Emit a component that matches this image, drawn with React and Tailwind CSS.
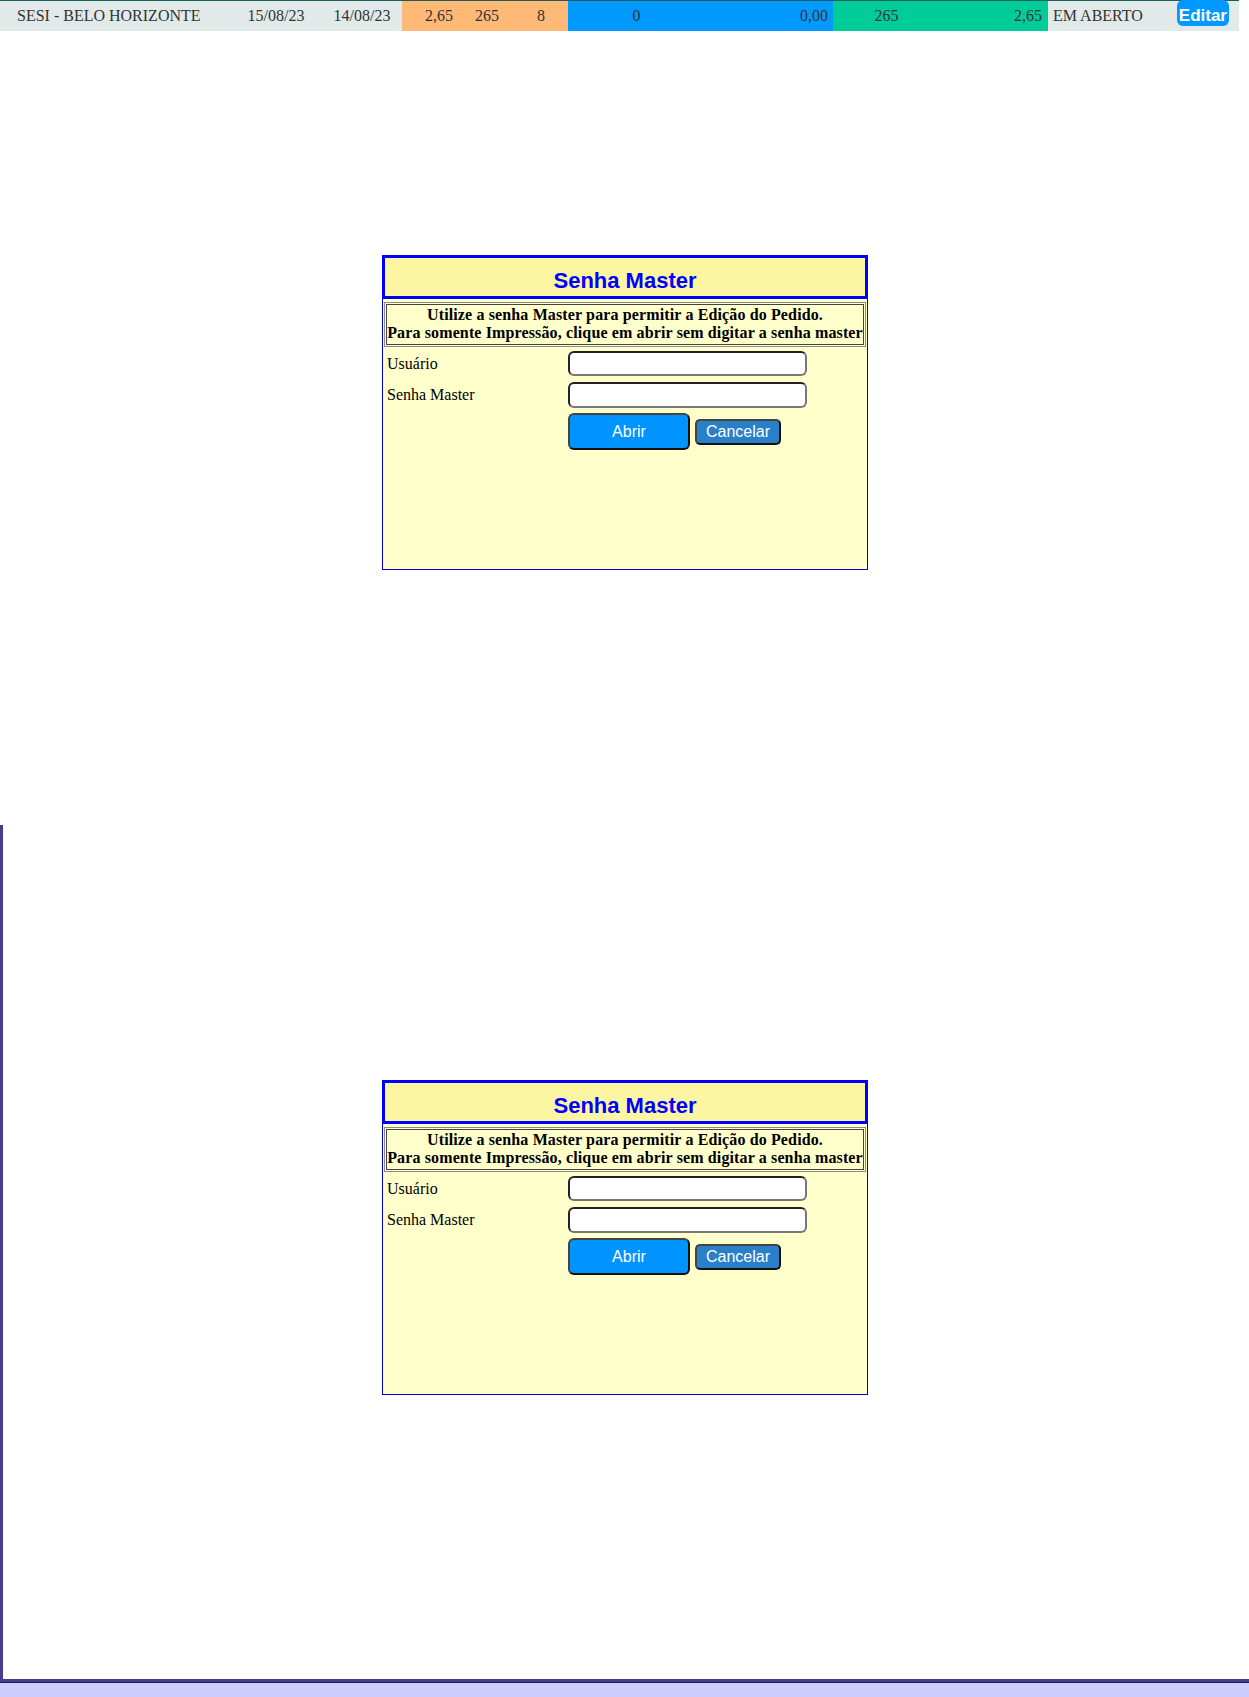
import React from 'react';

const serif = "font-['Liberation_Serif',serif]";
const sans = "font-['Liberation_Sans',Arial,sans-serif]";

function PedidoRow() {
    return (
        <div className={`flex w-[1239px] h-[31px] border-t border-[#1b5d59] bg-[#e1e9e9] text-[16px] leading-[30px] text-[#333] ${serif}`}>
            <div className="w-[230px] pl-[17px] whitespace-nowrap">SESI - BELO HORIZONTE</div>
            <div className="w-[92px] text-center">15/08/23</div>
            <div className="w-[80px] text-center">14/08/23</div>

            {/* quantidades */}
            <div className="flex bg-[#ffb977]">
                <div className="w-[55px] pr-[4px] text-right">2,65</div>
                <div className="w-[46px] pr-[4px] text-right">265</div>
                <div className="w-[46px] pr-[4px] text-right">8</div>
                <div className="w-[19px]" />
            </div>
            <div className="flex bg-[#0099ff]">
                <div className="w-[137px] text-center">0</div>
                <div className="w-[128px] pr-[5px] text-right">0,00</div>
            </div>
            <div className="flex bg-[#00cc99]">
                <div className="w-[107px] text-center">265</div>
                <div className="w-[108px] pr-[6px] text-right">2,65</div>
            </div>

            <div className="flex w-[191px] pl-[5px]">
                <span className="whitespace-nowrap">EM ABERTO</span>
                <button className={`ml-auto mr-[10px] -mt-px h-[26px] rounded-[6px] bg-[#0099ff] px-[2px] pt-[4px] text-[17px] font-bold leading-[21px] text-white ${sans}`}>
                    Editar
                </button>
            </div>
        </div>
    );
}

function SenhaMaster({ className }) {
    return (
        <div className={`w-[486px] h-[315px] border border-[#0000cc] bg-[#ffffcc] ${className}`}>
            {/* titulo */}
            <div className="-mx-px -mt-px h-[44px] border-[3px] border-[#0000ff] bg-[#fcf5a2] pt-[10px] text-center">
                <span className={`text-[22px] font-bold leading-[25px] text-[#0000ff] ${sans}`}>Senha Master</span>
            </div>

            <div className="mx-px mt-[3px] border border-[#8a8a8a] p-[1px]">
                <div className={`border border-[#444] pt-[1px] pb-[2px] text-center text-[16px] font-bold leading-[18px] tracking-[0.13px] text-black ${serif}`}>
                    <div>Utilize a senha Master para permitir a Edição do Pedido.</div>
                    <div className="whitespace-nowrap">Para somente Impressão, clique em abrir sem digitar a senha master</div>
                </div>
            </div>

            {/* form */}
            <div className={`mt-[1px] grid grid-cols-[185px_1fr] text-[16px] text-black ${serif}`}>
                <div className="flex h-[31px] items-center pl-[4px]">Usuário</div>
                <div className="flex h-[31px] items-center">
                    <input className="h-[25px] w-[239px] rounded-[6px] border-2 border-t-[#222] border-l-[#222] border-r-[#777] border-b-[#777] bg-white outline-none" />
                </div>
                <div className="flex h-[31px] items-center pl-[4px]">Senha Master</div>
                <div className="flex h-[31px] items-center">
                    <input type="password" className="h-[26px] w-[239px] rounded-[6px] border-2 border-t-[#222] border-l-[#222] border-r-[#777] border-b-[#777] bg-white outline-none" />
                </div>
                <div />
                <div className={`flex items-center gap-[5px] pt-[3px] ${sans}`}>
                    <button className="h-[37px] w-[122px] rounded-[6px] border-2 border-t-[#444] border-l-[#444] border-r-[#111] border-b-[#111] bg-[#0094ff] text-[16px] text-white">
                        Abrir
                    </button>
                    <button className="h-[26px] w-[86px] rounded-[5px] border-2 border-t-[#444] border-l-[#444] border-r-[#111] border-b-[#111] bg-[#2a80c8] text-[16px] leading-[20px] text-white">
                        Cancelar
                    </button>
                </div>
            </div>
        </div>
    );
}

export default function App() {
    return (
        <div className="w-[1249px] min-h-[1697px] bg-white">
            <PedidoRow />

            <SenhaMaster className="ml-[382px] mt-[224px]" />

            {/* frame inferior */}
            <div className="mt-[255px] h-[857px] border-l-[3px] border-b-[3px] border-[#443e8c] bg-white pt-[255px]">
                <SenhaMaster className="ml-[379px]" />
            </div>
            <div className="h-px bg-[#1e1a45]" />
            <div className="h-[14px] bg-[#ccccff]" />
        </div>
    );
}
